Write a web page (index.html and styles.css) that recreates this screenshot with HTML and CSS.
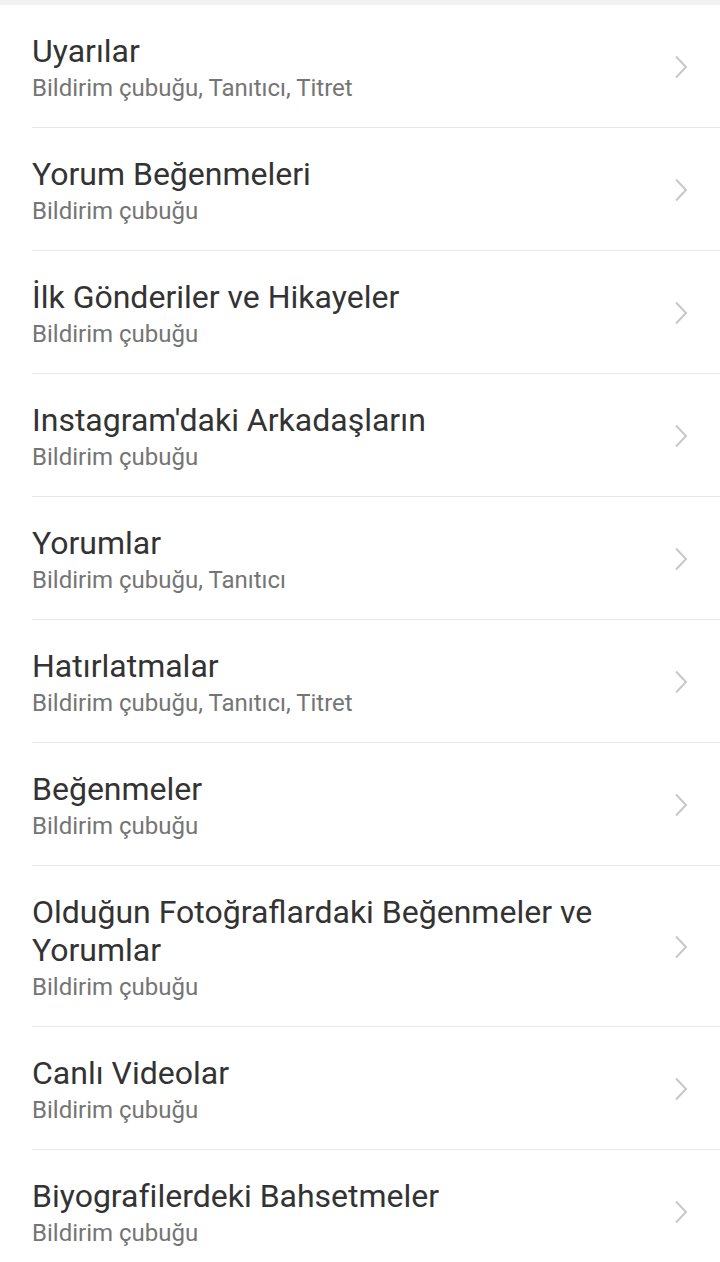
FILE: index.html
```html
<!DOCTYPE html>
<html lang="tr">
<head>
<meta charset="utf-8">
<link rel="stylesheet" href="styles.css">
</head>
<body>
<div class="topbar"></div>
<ul class="list">
  <li class="item"><div class="text"><div class="title">Uyarılar</div><div class="sub">Bildirim çubuğu, Tanıtıcı, Titret</div></div><svg class="chev" viewBox="0 0 14 24"><path d="M2 1.5 L12 12 L2 22.5"/></svg></li>
  <li class="item"><div class="text"><div class="title">Yorum Beğenmeleri</div><div class="sub">Bildirim çubuğu</div></div><svg class="chev" viewBox="0 0 14 24"><path d="M2 1.5 L12 12 L2 22.5"/></svg></li>
  <li class="item"><div class="text"><div class="title">İlk Gönderiler ve Hikayeler</div><div class="sub">Bildirim çubuğu</div></div><svg class="chev" viewBox="0 0 14 24"><path d="M2 1.5 L12 12 L2 22.5"/></svg></li>
  <li class="item"><div class="text"><div class="title">Instagram'daki Arkadaşların</div><div class="sub">Bildirim çubuğu</div></div><svg class="chev" viewBox="0 0 14 24"><path d="M2 1.5 L12 12 L2 22.5"/></svg></li>
  <li class="item"><div class="text"><div class="title">Yorumlar</div><div class="sub">Bildirim çubuğu, Tanıtıcı</div></div><svg class="chev" viewBox="0 0 14 24"><path d="M2 1.5 L12 12 L2 22.5"/></svg></li>
  <li class="item"><div class="text"><div class="title">Hatırlatmalar</div><div class="sub">Bildirim çubuğu, Tanıtıcı, Titret</div></div><svg class="chev" viewBox="0 0 14 24"><path d="M2 1.5 L12 12 L2 22.5"/></svg></li>
  <li class="item"><div class="text"><div class="title">Beğenmeler</div><div class="sub">Bildirim çubuğu</div></div><svg class="chev" viewBox="0 0 14 24"><path d="M2 1.5 L12 12 L2 22.5"/></svg></li>
  <li class="item"><div class="text"><div class="title">Olduğun Fotoğraflardaki Beğenmeler ve Yorumlar</div><div class="sub">Bildirim çubuğu</div></div><svg class="chev" viewBox="0 0 14 24"><path d="M2 1.5 L12 12 L2 22.5"/></svg></li>
  <li class="item"><div class="text"><div class="title">Canlı Videolar</div><div class="sub">Bildirim çubuğu</div></div><svg class="chev" viewBox="0 0 14 24"><path d="M2 1.5 L12 12 L2 22.5"/></svg></li>
  <li class="item"><div class="text"><div class="title">Biyografilerdeki Bahsetmeler</div><div class="sub">Bildirim çubuğu</div></div><svg class="chev" viewBox="0 0 14 24"><path d="M2 1.5 L12 12 L2 22.5"/></svg></li>
</ul>
</body>
</html>
```
FILE: styles.css
```css
html, body { margin: 0; padding: 0; background: #fff; }
body { font-family: Roboto, "Noto Sans", sans-serif; width: 720px; }
.topbar { height: 5px; background: #f2f2f2; }
.list { list-style: none; margin: 0; padding: 0 0 0 32px; }
.item {
  display: flex;
  align-items: center;
  border-bottom: 1px solid #e8e8e8;
  padding: 27px 0 25px 0;
  min-height: 70px;
}
.item:last-child { border-bottom: none; }
.text { flex: 1; min-width: 0; padding-right: 60px; }
.title { font-size: 32px; line-height: 38px; color: #333; }
.sub { font-size: 24px; line-height: 28px; margin-top: 4px; color: #757575; }
.chev { width: 14px; height: 24px; margin-right: 32px; fill: none; stroke: #c8c8c8; stroke-width: 2; flex-shrink: 0; }
```
